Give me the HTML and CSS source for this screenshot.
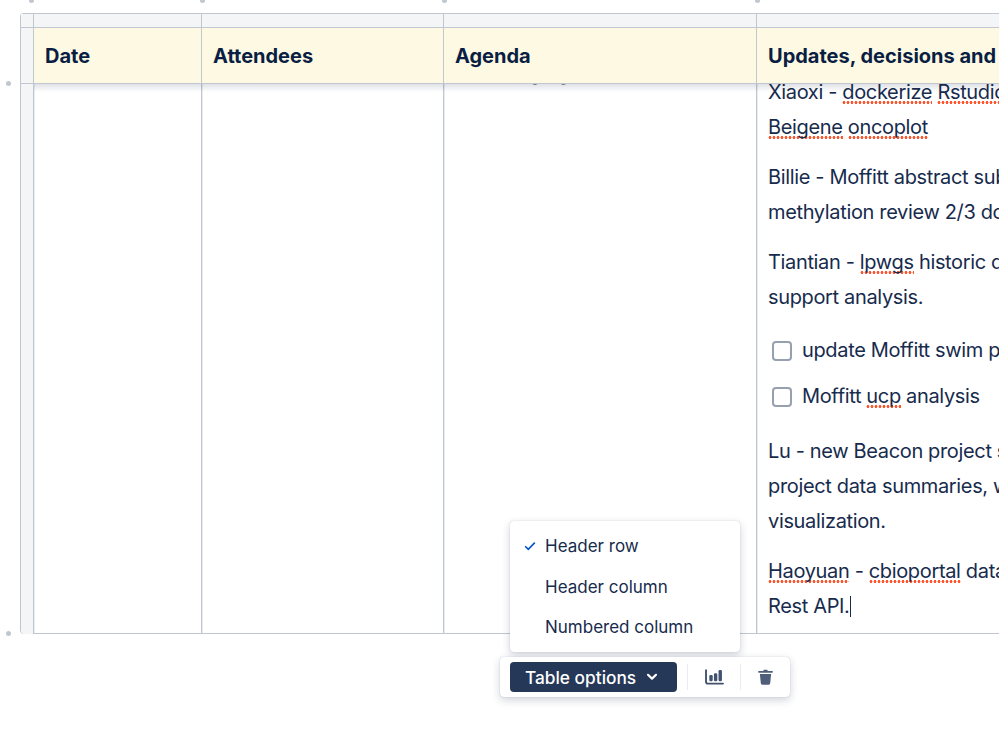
FILE: index.html
```html
<!DOCTYPE html>
<html lang="en">
<head>
  <meta charset="UTF-8">
  <meta name="viewport" content="width=device-width, initial-scale=1.0">
  <title>Meeting notes table</title>
  <link rel="stylesheet" href="styles.css">
</head>
<body>
  <div class="page">
    <span class="handle handle-a"></span>
    <span class="handle handle-b"></span>
    <span class="handle handle-c"></span>
    <span class="handle handle-d"></span>
    <span class="handle handle-e"></span>
    <span class="handle handle-f"></span>

    <div class="table">
      <div class="ctl"></div>
      <div class="ctl"></div>
      <div class="ctl"></div>
      <div class="ctl"></div>
      <div class="ctl ctl-last"></div>

      <div class="ctl"></div>
      <div class="head">Date</div>
      <div class="head">Attendees</div>
      <div class="head">Agenda</div>
      <div class="head head-last">Updates, decisions and action items</div>

      <div class="ctl ctl-side"></div>
      <div class="cell"></div>
      <div class="cell"></div>
      <div class="cell cell-agenda"><p>Study, age group review and plan</p></div>
      <div class="cell cell-last">
        <p>Xiaoxi - <span class="spell">dockerize</span> <span class="spell">Rstudio</span> server for the team<br><span class="spell">Beigene</span> <span class="spell">oncoplot</span></p>
        <p>Billie - Moffitt abstract submission and<br>methylation review 2/3 done this week</p>
        <p>Tiantian - <span class="spell">lpwgs</span> historic data review and<br>support analysis.</p>
        <div class="task task-first"><span class="box"></span><span>update Moffitt swim plot for review</span></div>
        <div class="task"><span class="box"></span><span>Moffitt <span class="spell">ucp</span> analysis</span></div>
        <p class="after-tasks">Lu - new Beacon project setup and review<br>project data summaries, working on the<br>visualization.</p>
        <p><span class="spell">Haoyuan</span> - <span class="spell">cbioportal</span> data loading using<br>Rest API.<span class="caret"></span></p>
      </div>
    </div>

    <div class="menu">
      <div class="menu-item">
        <svg class="check" width="12" height="10" viewBox="0 0 12 10"><path d="M1.2 5.2 4.3 8.3 10.8 1.6" fill="none" stroke="#0052cc" stroke-width="1.6"/></svg>
        Header row
      </div>
      <div class="menu-item">Header column</div>
      <div class="menu-item">Numbered column</div>
    </div>

    <div class="toolbar">
      <button class="btn-options">Table options
        <svg width="12" height="8" viewBox="0 0 12 8"><path d="M2 1.8 6 5.6 10 1.8" fill="none" stroke="#fff" stroke-width="2.2" stroke-linecap="round" stroke-linejoin="round"/></svg>
      </button>
      <span class="sep sep-a"></span>
      <svg class="tool-icon" width="19" height="16" viewBox="0 0 20 17">
        <path d="M1 1.2V13.500a2 2 0 0 0 2 2h16" fill="none" stroke="#42526e" stroke-width="2" stroke-linecap="round"/>
        <rect x="4.500" y="6.500" width="3.600" height="6.500" rx="1.300" fill="#42526e"/>
        <rect x="9.400" y="4.500" width="3.600" height="8.500" rx="1.300" fill="#42526e"/>
        <rect x="14.300" y="1" width="3.600" height="12" rx="1.300" fill="#42526e"/>
      </svg>
      <span class="sep sep-b"></span>
      <svg class="tool-icon" width="15" height="16" viewBox="0 0 16 17">
        <path d="M5.600 2 6.200.8h3.600L10.400 2H15a.9.9 0 0 1 0 1.900H1A.9.9 0 0 1 1 2z" fill="#505f79"/>
        <path d="M2 5.200h12l-1 10a1.600 1.600 0 0 1-1.600 1.500H4.600A1.600 1.600 0 0 1 3 15.200z" fill="#505f79"/>
      </svg>
    </div>
  </div>
</body>
</html>
```

FILE: styles.css
```css
html, body { margin: 0; height: 100%; overflow: hidden; background: #fff; }
body { font-family: Inter, "Noto Sans", sans-serif; color: #172b4d; }

.page { position: relative; width: 999px; height: 732px; overflow: hidden; padding: 13px 0 0 20px; box-sizing: border-box; }

/* resize dots around the table */
.handle { position: absolute; width: 5px; height: 5px; border-radius: 50%; background: #c1c7d0; }
.handle-a { left: 29px; top: -2px; }
.handle-b { left: 200px; top: -2px; }
.handle-c { left: 442px; top: -2px; }
.handle-d { left: 755px; top: -2px; }
.handle-e { left: 6px; top: 81px; }
.handle-f { left: 6px; top: 631px; }

.table {
  display: grid;
  grid-template-columns: 13px 168px 242px 313px 400px;
  grid-template-rows: 14px 56px 550px;
  width: 1137px;
  height: 621px;
  box-sizing: border-box;
  border: 1px solid #c1c7d0;
  border-right: 0;
  border-radius: 4px 0 0 4px;
}

.ctl, .cell { box-shadow: 1px 0 0 rgba(193, 199, 208, 0.35); }

.ctl { background: #f4f5f7; border-right: 1px solid #c1c7d0; border-bottom: 1px solid #c1c7d0; }
.ctl-side { border-bottom: 0; border-bottom-left-radius: 3px; }
.ctl-last { border-right: 0; }

.head {
  position: relative;
  z-index: 1;
  display: flex;
  align-items: center;
  padding-left: 11px;
  font-size: 20px;
  font-weight: 700;
  color: #091e42;
  white-space: nowrap;
  background: #fef9e3;
  border-right: 1px solid #c1c7d0;
  border-bottom: 1px solid #c1c7d0;
}
.head-last { border-right: 0; }

/* soft shadow under the sticky header row */
.head::after {
  content: "";
  position: absolute;
  left: 0;
  right: -1px;
  top: 100%;
  height: 8px;
  margin-top: 1px;
  background: linear-gradient(rgba(9, 30, 66, 0.13), rgba(9, 30, 66, 0));
}

.cell {
  border-right: 1px solid #c1c7d0;
  padding-left: 11px;
  overflow: hidden;
  font-size: 20px;
  line-height: 35px;
  letter-spacing: -0.35px;
  white-space: nowrap;
}
.cell-last { border-right: 0; }
.cell p { margin: 0 0 15px; }
.cell-last p:first-child { margin-top: -9px; }
.cell-agenda p { margin-top: -28px; }

/* spell check dots */
.spell {
  background: radial-gradient(circle at 2px 1.5px, #ff5630 1.2px, rgba(255, 86, 48, 0) 1.7px) repeat-x 0 100% / 4px 3px;
}

.task { display: flex; align-items: center; height: 35px; margin-bottom: 11px; }
.task-first { margin-top: 18px; }
.box {
  flex: none;
  width: 20px;
  height: 20px;
  margin: 0 10px 0 4px;
  border: 2px solid #97a0af;
  border-radius: 4px;
  box-sizing: border-box;
  background: #fff;
}
.cell p.after-tasks { margin-top: 20px; }

.caret { display: inline-block; width: 1px; height: 21px; background: #172b4d; vertical-align: -4px; }

.menu {
  position: absolute;
  left: 510px;
  top: 521px;
  width: 230px;
  height: 131px;
  padding: 5px 0;
  box-sizing: border-box;
  background: #fff;
  border-radius: 4px;
  box-shadow: 0 3px 8px rgba(9, 30, 66, 0.2), 0 0 1px rgba(9, 30, 66, 0.3);
  font-size: 17px;
}
.menu-item { position: relative; display: flex; align-items: center; height: 40.4px; padding-left: 35px; white-space: nowrap; }
.check { position: absolute; left: 14px; top: 15px; }

.toolbar {
  position: absolute;
  left: 500px;
  top: 657px;
  width: 290px;
  height: 40px;
  display: flex;
  align-items: center;
  padding-left: 10px;
  box-sizing: border-box;
  background: #fff;
  border-radius: 4px;
  box-shadow: 0 3px 8px rgba(9, 30, 66, 0.2), 0 0 1px rgba(9, 30, 66, 0.3);
}
.btn-options {
  display: flex;
  align-items: center;
  justify-content: space-between;
  width: 167px;
  height: 30px;
  padding: 0 19px 0 15px;
  box-sizing: border-box;
  border: 0;
  border-radius: 4px;
  background: #253858;
  color: #fff;
  font-family: inherit;
  font-size: 17.3px;
  font-weight: 500;
}
.sep { width: 1px; height: 26px; background: #ebecf0; }
.sep-a { margin: 0 17px 0 10px; }
.sep-b { margin: 0 17px 0 16px; }
.tool-icon { display: block; }
```
